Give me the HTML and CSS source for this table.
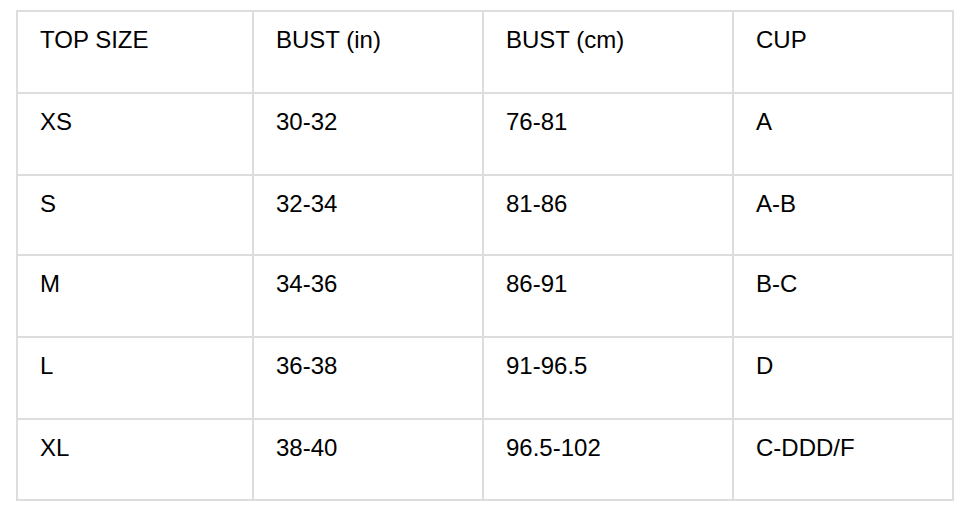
FILE: index.html
```html
<!DOCTYPE html>
<html>
<head>
<meta charset="utf-8">
<link rel="stylesheet" href="styles.css">
</head>
<body>
<div class="page">
<table class="size-table">
  <colgroup>
    <col class="c1"><col class="c2"><col class="c3"><col class="c4">
  </colgroup>
  <tr class="r-a"><td>TOP SIZE</td><td>BUST (in)</td><td>BUST (cm)</td><td>CUP</td></tr>
  <tr class="r-a"><td>XS</td><td>30-32</td><td>76-81</td><td>A</td></tr>
  <tr class="r-b"><td>S</td><td>32-34</td><td>81-86</td><td>A-B</td></tr>
  <tr class="r-a"><td>M</td><td>34-36</td><td>86-91</td><td>B-C</td></tr>
  <tr class="r-a"><td>L</td><td>36-38</td><td>91-96.5</td><td>D</td></tr>
  <tr class="r-c"><td>XL</td><td>38-40</td><td>96.5-102</td><td>C-DDD/F</td></tr>
</table>
</div>
</body>
</html>
```
FILE: styles.css
```css
html, body {
  margin: 0;
  padding: 0;
  background: #ffffff;
}
.page {
  padding: 10px 0 0 16px;
}
.size-table {
  border-collapse: collapse;
  table-layout: fixed;
  width: 936px;
  font-family: "Liberation Sans", Arial, sans-serif;
  font-size: 24px;
  color: #000000;
}
.c1 { width: 236px; }
.c2 { width: 230px; }
.c3 { width: 250px; }
.c4 { width: 220px; }
.size-table td {
  border: 2px solid #dddddd;
  padding: 15px 22px 0 22px;
  vertical-align: top;
  line-height: 26px;
  box-sizing: border-box;
}
.r-a td { height: 82px; }
.r-b td { height: 80px; }
.r-c td { height: 81px; }
```
